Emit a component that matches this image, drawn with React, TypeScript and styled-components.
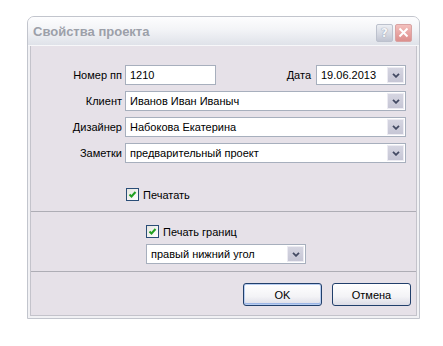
import React from "react";
import styled, { createGlobalStyle } from "styled-components";

const Global = createGlobalStyle`
  html, body { margin: 0; padding: 0; background: #ffffff; }
  body { font-family: "Liberation Sans", Arial, sans-serif; font-size: 11px; color: #000; }
  * { box-sizing: border-box; }
`;

const Page = styled.div`
  padding: 16px 0 0 27px;
`;

const Window = styled.div`
  width: 393px;
  border: 1px solid #c2c5cd;
  border-radius: 7px 7px 0 0;
  background: #f1f1f4;
  overflow: hidden;
`;

const TitleBar = styled.div`
  height: 29px;
  display: flex;
  align-items: center;
  justify-content: space-between;
  padding: 0 7px 0 5px;
  background: linear-gradient(#fdfdfe 0%, #f3f4f7 45%, #dfe2e9 100%);
  border-bottom: 1px solid #f7f7f9;
`;

const Title = styled.span`
  font-family: "Liberation Sans", Arial, sans-serif;
  font-weight: bold;
  font-size: 13px;
  color: #9ca0a9;
  padding-top: 1px;
`;

const TitleButtons = styled.div`
  display: flex;
  gap: 2px;
  padding-top: 3px;
`;

const CapButton = styled.div<{ $kind: "help" | "close" }>`
  width: 17px;
  height: 18px;
  border-radius: 2px;
  display: flex;
  align-items: center;
  justify-content: center;
  border: 1px solid ${(p) => (p.$kind === "close" ? "#d9a3a3" : "#bcc1cd")};
  background: ${(p) =>
    p.$kind === "close"
      ? "linear-gradient(#f3c0bd, #e6a09e 60%, #dc8f8d)"
      : "linear-gradient(#eceef3, #d3d6e0 60%, #c0c4d1)"};
  color: #f4f5f8;
  font-family: "DejaVu Sans", sans-serif;
  font-size: 12px;
  font-weight: bold;
  text-shadow: 0 0 1px #9aa0b0, 0 0 1px #9aa0b0;
`;

const Body = styled.div`
  margin: 0 2px 2px;
  border: 1px solid #c4c3cb;
  border-top: none;
  background: #e6e1e8;
`;

const Section = styled.div<{ $pt: number; $pb: number }>`
  padding-top: ${(p) => p.$pt}px;
  padding-bottom: ${(p) => p.$pb}px;
  & + & {
    border-top: 1px solid #aeadb5;
  }
`;

const FormGrid = styled.div`
  display: grid;
  grid-template-columns: 91px 281px;
  grid-auto-rows: 20px;
  column-gap: 3px;
  row-gap: 6px;
`;

const Label = styled.span`
  display: flex;
  align-items: center;
  justify-content: flex-end;
  white-space: nowrap;
`;

const FirstRow = styled.div`
  display: flex;
  align-items: center;
  justify-content: space-between;
`;

const DateGroup = styled.div`
  display: flex;
  align-items: center;
  gap: 5px;
`;

const Field = styled.div<{ $w?: number }>`
  width: ${(p) => (p.$w ? `${p.$w}px` : "100%")};
  height: 20px;
  border: 1px solid #a7afbd;
  background: #ffffff;
  display: flex;
  align-items: center;
  padding-left: 4px;
`;

const FieldText = styled.span`
  flex: 1;
  white-space: nowrap;
  overflow: hidden;
`;

const DropBtn = styled.div`
  width: 17px;
  height: 16px;
  margin-right: 1px;
  border: 1px solid #ecebf2;
  background: linear-gradient(#d5d5e1, #c6c6d5);
  display: flex;
  align-items: center;
  justify-content: center;
`;

const Chevron = () => (
  <svg width="8" height="5" viewBox="0 0 8 5">
    <path d="M1 0.8 L4 3.8 L7 0.8" fill="none" stroke="#434a63" strokeWidth="1.8" />
  </svg>
);

const Combo: React.FC<{ value: string; w?: number }> = ({ value, w }) => (
  <Field $w={w}>
    <FieldText>{value}</FieldText>
    <DropBtn>
      <Chevron />
    </DropBtn>
  </Field>
);

const CheckRow = styled.div<{ $pl: number; $mt?: number }>`
  display: flex;
  align-items: center;
  gap: 4px;
  padding-left: ${(p) => p.$pl}px;
  margin-top: ${(p) => p.$mt ?? 0}px;
  height: 13px;
`;

const Box = styled.div`
  width: 13px;
  height: 13px;
  border: 1px solid #2a4d77;
  background: linear-gradient(135deg, #e6e6e0, #ffffff);
  display: flex;
  align-items: center;
  justify-content: center;
`;

const Check = () => (
  <svg width="9" height="9" viewBox="0 0 9 9">
    <path d="M1.5 4.5 L3.5 6.5 L7.5 2" fill="none" stroke="#21a121" strokeWidth="2" />
  </svg>
);

const Indented = styled.div<{ $pl: number; $mt: number }>`
  padding-left: ${(p) => p.$pl}px;
  margin-top: ${(p) => p.$mt}px;
`;

const ButtonBar = styled.div`
  display: flex;
  justify-content: flex-end;
  gap: 10px;
  padding-right: 5px;
`;

const Button = styled.div<{ $default?: boolean }>`
  width: 79px;
  height: 23px;
  border: 1px solid #213f6b;
  border-radius: 3px;
  display: flex;
  align-items: center;
  justify-content: center;
  background: linear-gradient(#ffffff 0%, #f3f3f6 60%, #dcdce6 100%);
  box-shadow: ${(p) =>
    p.$default ? "inset 0 0 0 1px #b8cdf0, inset 0 -1px 0 1px #9cb6e6" : "none"};
`;

export default function App() {
  return (
    <>
      <Global />
      <Page>
        <Window>
          <TitleBar>
            <Title>Свойства проекта</Title>
            <TitleButtons>
              <CapButton $kind="help">?</CapButton>
              <CapButton $kind="close">
                <svg width="11" height="11" viewBox="0 0 11 11">
                  <path d="M1.5 1.5 L9.5 9.5 M9.5 1.5 L1.5 9.5" stroke="#ffffff" strokeWidth="2" />
                </svg>
              </CapButton>
            </TitleButtons>
          </TitleBar>
          <Body>
            <Section $pt={19} $pb={10}>
              <FormGrid>
                <Label>Номер пп</Label>
                <FirstRow>
                  <Field $w={91}>
                    <FieldText>1210</FieldText>
                  </Field>
                  <DateGroup>
                    <Label>Дата</Label>
                    <Combo value="19.06.2013" w={90} />
                  </DateGroup>
                </FirstRow>
                <Label>Клиент</Label>
                <Combo value="Иванов Иван Иваныч" />
                <Label>Дизайнер</Label>
                <Combo value="Набокова Екатерина" />
                <Label>Заметки</Label>
                <Combo value="предварительный проект" />
              </FormGrid>
              <CheckRow $pl={95} $mt={25}>
                <Box>
                  <Check />
                </Box>
                <span>Печатать</span>
              </CheckRow>
            </Section>
            <Section $pt={13} $pb={7}>
              <CheckRow $pl={115}>
                <Box>
                  <Check />
                </Box>
                <span>Печать границ</span>
              </CheckRow>
              <Indented $pl={115} $mt={6}>
                <Combo value="правый нижний угол" w={160} />
              </Indented>
            </Section>
            <Section $pt={11} $pb={9}>
              <ButtonBar>
                <Button $default>OK</Button>
                <Button>Отмена</Button>
              </ButtonBar>
            </Section>
          </Body>
        </Window>
      </Page>
    </>
  );
}
